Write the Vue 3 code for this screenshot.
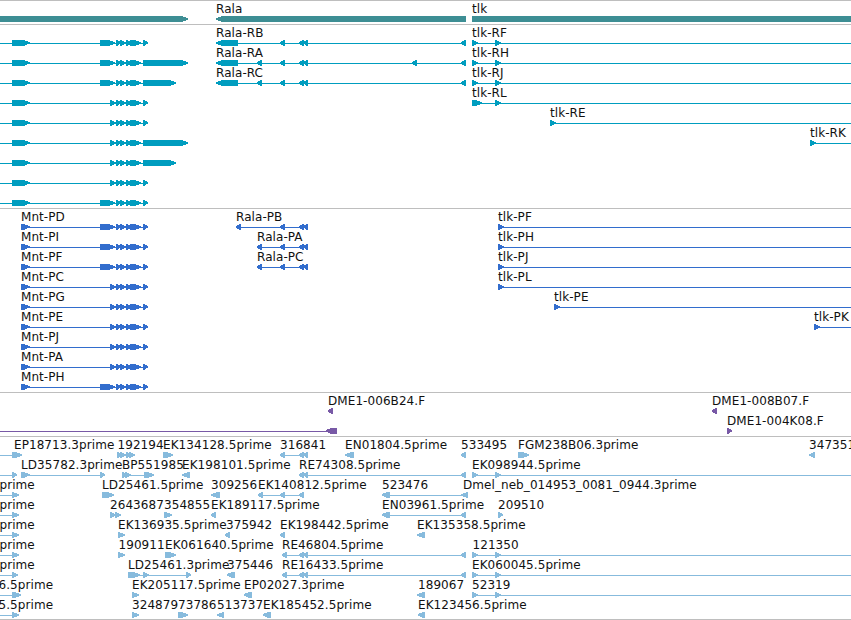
<script setup>
// Feature: [row, label, label x, direction, exons, line start, line end]
const WIDTH = 851
const EDGE = 870

const tail = [[116, 121], [120, 126], [126, 132], [130, 141]]
const longExon = [100, 115]
const shortExon = [110, 116]
const ralaPair = [[298.5, 304], [303, 308]]

function mntTranscript(row, first, lastEnd) {
  return [row, '', 0, 1, [[12, 29.5], first, ...tail, [143, lastEnd]], 0]
}

function mntProtein(row, name, first) {
  return [row, name, 21, 1, [[21, 29.5], first, ...tail, [143, 148]]]
}

function tlk(row, name, x, exons = [[x, x + 6]]) {
  return [row, name, x, 1, exons, x, EDGE]
}

function leftEdge(row, name, x, end) {
  return [row, name, x, 1, [[12, end]], 0]
}

const tracks = [
  {
    name: 'genes',
    height: 24,
    color: '#3d8e94',
    features: [
      [0, '', 0, 1, [[-10, 188]]],
      [0, 'Rala', 216, -1, [[216, 466]]],
      [0, 'tlk', 472, 1, [[472, EDGE]]]
    ]
  },
  {
    name: 'transcripts',
    height: 184,
    color: '#009dbf',
    features: [
      mntTranscript(0, longExon, 148),
      mntTranscript(1, longExon, 188),
      mntTranscript(2, longExon, 176),
      mntTranscript(3, shortExon, 148),
      mntTranscript(4, shortExon, 148),
      mntTranscript(5, shortExon, 188),
      mntTranscript(6, shortExon, 176),
      mntTranscript(7, shortExon, 148),
      mntTranscript(8, longExon, 148),
      [0, 'Rala-RB', 216, -1, [[216, 238], [279.5, 285], ...ralaPair, [460.5, 466]]],
      [1, 'Rala-RA', 216, -1, [[216, 238], [256.5, 262], [279.5, 285], ...ralaPair, [411.5, 417], [460.5, 466]]],
      [2, 'Rala-RC', 216, -1, [[216, 238], [256.5, 262], [279.5, 285], ...ralaPair, [460.5, 466]]],
      tlk(0, 'tlk-RF', 472, [[472, 478], [495, 501]]),
      tlk(1, 'tlk-RH', 472, [[472, 478], [495, 501]]),
      tlk(2, 'tlk-RJ', 472, [[472, 478], [495, 501]]),
      tlk(3, 'tlk-RL', 472, [[472, 482], [495, 501]]),
      tlk(4, 'tlk-RE', 550),
      tlk(5, 'tlk-RK', 810)
    ]
  },
  {
    name: 'proteins',
    height: 184,
    color: '#326dcd',
    features: [
      mntProtein(0, 'Mnt-PD', longExon),
      mntProtein(1, 'Mnt-PI', longExon),
      mntProtein(2, 'Mnt-PF', longExon),
      mntProtein(3, 'Mnt-PC', shortExon),
      mntProtein(4, 'Mnt-PG', shortExon),
      mntProtein(5, 'Mnt-PE', shortExon),
      mntProtein(6, 'Mnt-PJ', shortExon),
      mntProtein(7, 'Mnt-PA', shortExon),
      mntProtein(8, 'Mnt-PH', longExon),
      [0, 'Rala-PB', 236, -1, [[235.5, 241], [279.5, 285], ...ralaPair]],
      [1, 'Rala-PA', 257, -1, [[256.5, 262], [279.5, 285], ...ralaPair]],
      [2, 'Rala-PC', 257, -1, [[256.5, 262], [279.5, 285], ...ralaPair]],
      tlk(0, 'tlk-PF', 498),
      tlk(1, 'tlk-PH', 498),
      tlk(2, 'tlk-PJ', 498),
      tlk(3, 'tlk-PL', 498),
      tlk(4, 'tlk-PE', 554),
      tlk(5, 'tlk-PK', 814)
    ]
  },
  {
    name: 'clones',
    height: 44,
    color: '#7859a6',
    features: [
      [0, 'DME1-006B24.F', 328, -1, [[327.5, 333]]],
      [0, 'DME1-008B07.F', 712, -1, [[711.5, 717]]],
      [1, '', 0, -1, [[325.5, 337]], 0],
      [1, 'DME1-004K08.F', 727, 1, [[727, 732]]]
    ]
  },
  {
    name: 'ests',
    height: 184,
    color: '#87bbdd',
    features: [
      leftEdge(0, 'EP18713.3prime', 14, 22),
      [0, '192194', 117.5, 1, [[117, 122], [120, 126], [126, 131], [129, 135]]],
      [0, 'EK134128.5prime', 163, 1, [[163, 173]]],
      [0, '316841', 280, -1, [[279.5, 285], ...ralaPair]],
      [0, 'EN01804.5prime', 345, -1, [[345, 354]]],
      [0, '533495', 461, -1, [[460.5, 466]]],
      [0, 'FGM238B06.3prime', 518, 1, [[518, 529]]],
      [0, '347351', 809, -1, [[809, 815]]],

      leftEdge(1, '', 0, 17),
      [1, 'LD35782.3prime', 21, 1, [[21, 29.5], [100, 105]]],
      [1, 'BP551985', 122, 1, [[122, 127], [125, 131], [144, 154]]],
      [1, 'EK198101.5prime', 182, -1, [[182, 190]]],
      [1, 'RE74308.5prime', 299, -1, [...ralaPair, [460.5, 466]]],
      tlk(1, 'EK098944.5prime', 472, [[472, 478], [495, 501]]),

      leftEdge(2, 'prime', -0.5, 19),
      [2, 'LD25461.5prime', 102, 1, [[102, 114]]],
      [2, '309256', 211, -1, [[211, 220]]],
      [2, 'EK140812.5prime', 258, -1, [[257.5, 263], [279.5, 285], [298.5, 304]]],
      [2, '523476', 382, -1, [[381.5, 390], [461, 468]]],
      [2, 'Dmel_neb_014953_0081_0944.3prime', 463, -1, []],

      leftEdge(3, 'prime', -0.5, 19),
      [3, '2643687', 110, 1, [[110, 115.5], [115, 121]]],
      [3, '354855', 164, 1, [[164, 172]]],
      [3, 'EK189117.5prime', 211, -1, [[210.5, 216]]],
      [3, 'EN03961.5prime', 382, -1, [[381.5, 390], [460.5, 466]]],
      [3, '209510', 498, 1, [[498, 503]]],

      leftEdge(4, 'prime', -0.5, 19),
      [4, 'EK136935.5prime', 118, 1, [[118, 125]]],
      [4, '375942', 226, -1, [[224.5, 230]]],
      [4, 'EK198442.5prime', 280, -1, [[279.5, 285]]],
      [4, 'EK135358.5prime', 417, -1, [[417, 425]]],

      leftEdge(5, 'prime', -0.5, 19),
      [5, '190911', 118.5, 1, [[118, 125]]],
      [5, 'EK061640.5prime', 165, 1, [[165, 176]]],
      [5, 'RE46804.5prime', 282, -1, [[281.5, 287], ...ralaPair, [460.5, 466]]],
      tlk(5, '121350', 472.5, [[472, 478], [495, 501]]),

      leftEdge(6, 'prime', -0.5, 18),
      [6, 'LD25461.3prime', 128, 1, [[128, 140], [143, 149], [186, 191]]],
      [6, '375446', 227, -1, [[226.5, 235]]],
      [6, 'RE16433.5prime', 282, -1, [[281.5, 287], ...ralaPair, [460.5, 466]]],
      tlk(6, 'EK060045.5prime', 472, [[472, 478], [495, 501]]),

      leftEdge(7, '6.5prime', -1.5, 21),
      [7, 'EK205117.5prime', 132, 1, [[132, 139]]],
      [7, 'EP02027.3prime', 244, -1, [[243.5, 252]]],
      [7, '189067', 418, -1, [[417, 425]]],
      tlk(7, '52319', 472, [[472, 478], [495, 501]]),

      leftEdge(8, '5.5prime', -1.5, 19),
      [8, '324879', 132, 1, [[132, 139]]],
      [8, '73786', 178, 1, [[178, 188]]],
      [8, '513737', 217, -1, [[217, 224]]],
      [8, 'EK185452.5prime', 263, -1, [[262.5, 271]]],
      [8, 'EK123456.5prime', 418, -1, [[417.5, 425]]]
    ]
  }
]

function toItem([row, label, labelX, dir, exons, from, to]) {
  const y = row * 20
  const start = from ?? exons[0]?.[0] ?? 0
  const end = to ?? exons[exons.length - 1]?.[1] ?? start
  const hasLine = exons.length > 1 || from !== undefined
  return {
    label,
    labelX,
    y,
    line: hasLine ? { x: start, width: Math.max(end - start - (dir > 0 && to === undefined ? 1 : 0), 0) } : null,
    shapes: exons.map(([a, b]) => arrow(a, b, y + 15, dir))
  }
}

// Block six pixels high with a pointed head on the side it reads towards
function arrow(a, b, top, dir) {
  const head = Math.min(6, b - a - 1)
  const mid = top + 3
  const bottom = top + 6
  if (dir > 0) {
    return `${a},${top} ${b - head},${top} ${b},${mid - 0.8} ${b},${mid + 0.6} ${b - head},${bottom} ${a},${bottom}`
  }
  return `${b},${top} ${a + head},${top} ${a},${mid - 0.8} ${a},${mid + 0.6} ${a + head},${bottom} ${b},${bottom}`
}

const rendered = tracks.map((track) => ({ ...track, items: track.features.map(toItem) }))
</script>

<template>
  <main class="browser">
    <section
      v-for="track in rendered"
      :key="track.name"
      class="track"
      :style="{ height: track.height + 'px', color: track.color }"
    >
      <svg class="canvas" :width="WIDTH" :height="track.height - 1">
        <g v-for="(item, index) in track.items" :key="index" class="glyph">
          <rect v-if="item.line" :x="item.line.x" :y="item.y + 18" :width="item.line.width" height="1" />
          <polygon v-for="(points, n) in item.shapes" :key="n" :points="points" />
        </g>
        <text
          v-for="(item, index) in track.items"
          :key="'label' + index"
          class="label"
          :x="item.labelX"
          :y="item.y + 12"
        >{{ item.label }}</text>
      </svg>
    </section>
  </main>
</template>

<style>
body {
  margin: 0;
  background: #fff;
}
</style>

<style scoped>
.browser {
  width: 851px;
  height: 620px;
  overflow: hidden;
  background: #fff;
  display: flex;
  flex-direction: column;
}

.track {
  box-sizing: border-box;
  flex-shrink: 0;
  border-top: 1px solid #bebebe;
}

.track:last-child {
  border-bottom: 1px solid #bebebe;
}

.canvas {
  display: block;
}

.glyph {
  fill: currentColor;
  shape-rendering: crispEdges;
}

.label {
  fill: #111;
  font-family: 'DejaVu Sans', sans-serif;
  font-size: 12px;
  letter-spacing: 0.07px;
}
</style>
